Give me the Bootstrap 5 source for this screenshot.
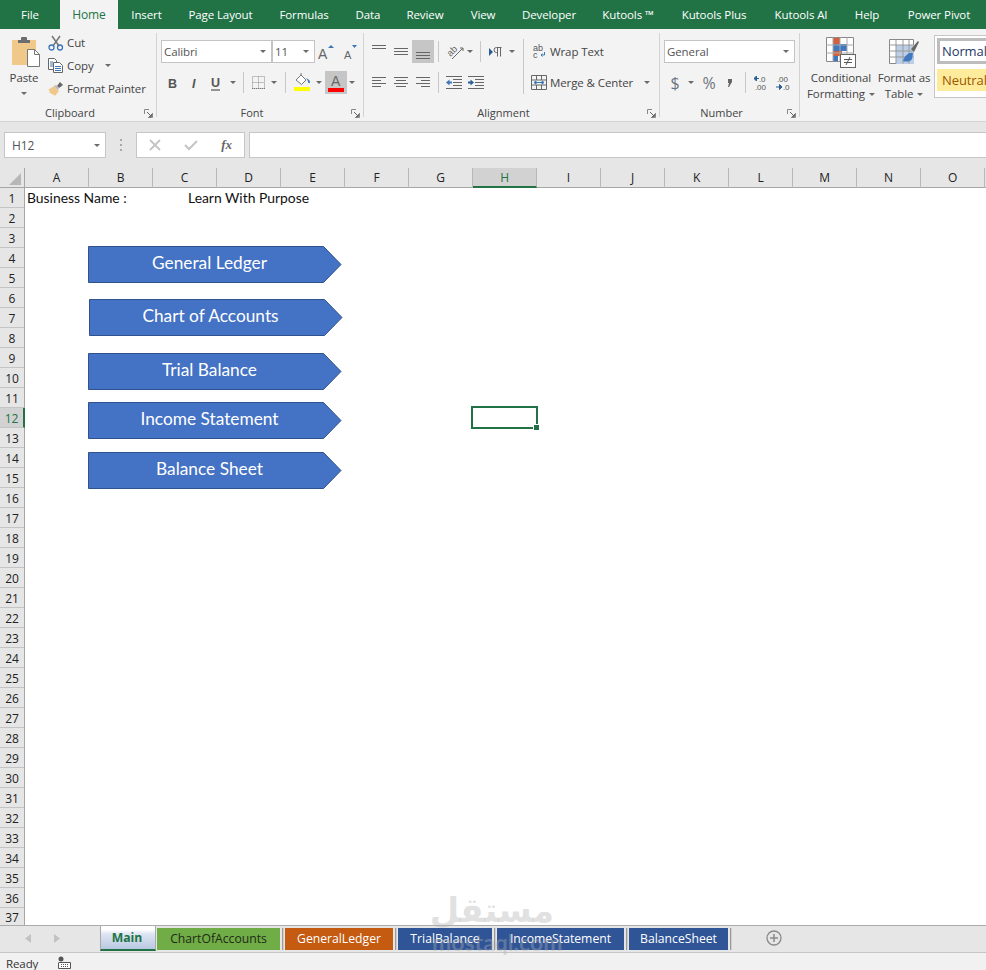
<!DOCTYPE html>
<html lang="en">
<head>
<meta charset="utf-8">
<title>Excel</title>
<link rel="stylesheet" href="https://cdn.jsdelivr.net/npm/bootstrap@5.3.0/dist/css/bootstrap.min.css">
<style>
html,body{height:970px;overflow:hidden;margin:0}
body{font-family:"Open Sans","Noto Sans",sans-serif;font-size:11.5px;color:#444;background:#fff;letter-spacing:-.1px}
.xl-app{width:986px;height:970px;position:relative;overflow:hidden}
.xl-tabs{display:grid;grid-template-columns:60px 58px 57px 91px 76px 52px 62px 54px 78px 80px 92px 82px 50px 94px;height:29px;background:#217346;color:#fff;line-height:29px;text-align:center;font-size:11.5px}
.xl-tabs .is-on{background:#f3f3f3;color:#217346;font-size:12px}
.xl-ribbon{height:93px;background:#f3f3f3;border-bottom:1px solid #d4d4d4;padding:4px 0;overflow:hidden}
.rg{height:84px;border-right:1px solid #d2d2d2;flex:none;display:flex;flex-direction:column}
.rg-clip{width:157px}.rg-font{width:207px;padding-left:4px}.rg-align{width:296px;padding-left:4px}.rg-num{width:140px;padding-left:4px}
.rg-style{width:186px;border-right:0;padding-left:6px}
.rg-body{flex:1;min-height:0}
.rg-foot{height:14px;margin-bottom:-3px;flex:none;display:flex;align-items:center;line-height:14px;font-size:11px;letter-spacing:0}
.rg-font .rg-foot,.rg-align .rg-foot,.rg-num .rg-foot{margin-left:-4px}
.rg-foot span{flex:1;text-align:center;padding-right:4px}
.launch{width:9px;height:9px;margin-right:3px;flex:none}
.rows{padding-top:7px;display:flex;flex-direction:column;gap:8px}
.rw{display:flex;height:23px;align-items:center}
.tb{width:22px;height:23px;display:flex;align-items:center;justify-content:center;flex:none;position:relative}
.tb.on{background:#c6c6c6}
.tb-n{width:10px}.tb-m{width:12px}.tb-w{width:32px;gap:3px}.tb-c{width:20px}
.drop{display:inline-block;width:0;height:0;border:3px solid transparent;border-top:3px solid #6a6a6a;border-bottom:0;flex:none}
.vs{width:1px;height:21px;background:#c8c8c8;flex:none}
.m4{margin:0 4px}.m5{margin:0 5px}.ml2{margin-left:2px}
.vs-t{width:1px;height:55px;background:#c8c8c8;margin:6px 5px 0 5px;flex:none;align-self:flex-start}
.bx{height:23px;background:#fff;border:1px solid #c4c4c4;display:flex;align-items:center;justify-content:space-between;padding:0 5px 0 2px;font-size:11.5px;color:#555}
.bx-font{width:111px}.bx-size{width:43px}.bx-num{width:131px}
.ltr{font-family:"Liberation Serif",serif;font-size:13px;color:#666}
.pastecol{width:48px;text-align:center;padding-top:4px;line-height:14px;color:#444}
.pastecol svg{display:block;margin:0 auto 4px 12px}
.pc-c{padding-top:7px}
.sm-rows{margin-top:-2px;display:flex;flex-direction:column}
.sm{height:23px;display:flex;align-items:center;gap:3px;color:#444;white-space:nowrap}
.sm svg{flex:none}
.sm-mg{margin-left:2px}
.bigb{display:flex;flex-direction:column;align-items:center;text-align:center;line-height:16px;color:#444;flex:none;padding-top:4px}
.bigb svg{margin-bottom:1px;height:32px}
.bigb-cf{width:70px}.bigb-ft{width:56px}
.gal{width:60px;height:63px;margin:2px 0 0 2px;background:#fff;border:1px solid #c6c6c6;border-right:0;padding:2px;flex:none;overflow:hidden}
.gal-a{height:26px;border:3px solid #bdbdbd;border-right:0;background:#fff;color:#1f3864;font-size:13px;line-height:21px;padding-left:2px;white-space:nowrap;overflow:hidden}
.gal-b{height:22px;margin-top:5px;background:#ffeb9c;color:#9c5700;font-size:13px;line-height:22px;padding-left:5px;white-space:nowrap;overflow:hidden}
.xl-fbar{height:46px;background:#e6e6e6;padding:10px 0 10px 4px;display:flex}
.fb{height:26px;background:#fff;border:1px solid #c6c6c6}
.fb-name{width:102px;display:flex;align-items:center;justify-content:space-between;padding:1px 5px 0 7px;font-size:12px;color:#555}
.fb-dots{width:30px;display:flex;align-items:center;justify-content:center}
.fb-fx{width:109px;display:flex;align-items:center;justify-content:space-between;padding:0 12px 0 12px}
.fb-in{flex:1;margin-left:4px;border-right:0}
.xl-cols{display:grid;grid-template-columns:25px repeat(15,64px);height:20px;background:#e6e6e6;border-bottom:1px solid #a6a6a6;line-height:19px;text-align:center;font-size:12px;color:#222}
.xl-cols>div{border-right:1px solid #b8b8b8}
.xl-cols .cor{display:flex;align-items:flex-end;justify-content:flex-end;padding:0 3px 3px 0;border-right:1px solid #a6a6a6}
.xl-cols .sel{background:#d2d2d2;color:#217346;border-bottom:2px solid #217346;height:20px}
.xl-sheet{height:737px;display:flex;position:relative;overflow:hidden}
.rh{width:25px;flex:none;background:#e6e6e6;border-right:1px solid #a6a6a6;text-align:center;font-size:12px;color:#222}
.rh div{height:20px;line-height:21px;border-bottom:1px solid #c4c4c4}
.rh div:last-child{height:17px;line-height:15px;padding-top:2px;border-bottom:0}
.rh .sel{background:#d2d2d2;color:#217346;border-right:2px solid #217346;margin-right:-1px}
.cells{flex:1;position:relative;font-family:"Lato","Open Sans",sans-serif;font-size:13.9px;color:#111;letter-spacing:0}
.celltxt{display:flex;height:20px;line-height:20px;padding-left:2px}
.celltxt span:first-child{width:161px}
.shp{position:absolute;width:255px;height:39px;color:#fff;font-family:"Lato","Open Sans",sans-serif;font-size:17.3px;letter-spacing:0}
.shp svg{position:absolute;inset:0}
.shp span{position:absolute;left:0;width:243px;top:0;line-height:33px;text-align:center}
.s1{left:63px;top:58px}.s2{left:64px;top:111px}.s3{left:63px;top:165px}.s4{left:63px;top:214px}.s5{left:63px;top:264px}
.cursor{position:absolute;left:446px;top:218px;width:67px;height:23px;border:2px solid #217346}
.cursor i{position:absolute;right:-3px;bottom:-3px;background:#217346;border:1px solid #fff;border-width:1px 0 0 1px;box-sizing:content-box;display:block;width:5px;height:5px}
.xl-sbar{height:28px;background:#e6e6e6;border-top:1px solid #ababab;border-bottom:1px solid #c6c6c6;display:flex;color:#222;font-size:12.2px}
.nav-arrows{width:100px;display:flex;align-items:center;padding:0 0 2px 25px;gap:23px}
.st{height:22px;margin-top:2px;line-height:22px;text-align:center;flex:none;letter-spacing:0}
.st-main{width:56px;height:25px;margin-top:0;border:1px solid #a8a8a8;border-top:0;border-bottom:2px solid #217346;background:linear-gradient(#fff,#fff 15%,#dde5f2 35%,#b8c8e2);color:#217346;font-weight:700;line-height:24px;margin-right:1px;padding-right:2px}
.st-a{width:123px;background:#70ad47;color:#1f2a16}
.st-b{width:108px;background:#c55a11;color:#fff}
.st-c{background:#2f5597;color:#fff}
.st-c1{width:94px}.st-c2{width:127px}.st-c3{width:99px}
.tsep{width:1px;height:22px;margin:2px 2px 0 2px;background:#9a9a9a;flex:none;box-shadow:1px 0 0 #cfcfcf}
.addtab{margin-left:33px;display:flex;align-items:center;padding-bottom:2px}
.xl-status{height:17px;background:#f1f1f1;display:flex;align-items:flex-end;padding-left:6px;font-size:11.5px;line-height:13px;color:#333;gap:20px}
.wm{position:absolute;left:432px;top:889px;width:122px;text-align:center;color:rgba(175,175,175,.38);pointer-events:none;font-weight:700}
.wm-ar{font-family:"DejaVu Sans",sans-serif;font-size:34px;line-height:42px;display:block}
.wm-en{font-family:"Lato",sans-serif;font-size:23px;line-height:22px;display:block;letter-spacing:0}
</style>
</head>
<body>
<div class="xl-app">
  <div class="xl-tabs">
    <div>File</div><div class="is-on">Home</div><div>Insert</div><div>Page Layout</div><div>Formulas</div><div>Data</div><div>Review</div><div>View</div><div>Developer</div><div>Kutools ™</div><div>Kutools Plus</div><div>Kutools AI</div><div>Help</div><div>Power Pivot</div>
  </div>

  <div class="xl-ribbon d-flex">
    <!-- Clipboard -->
    <div class="rg rg-clip">
      <div class="rg-body d-flex">
        <div class="pastecol">
          <svg width="28" height="30" viewBox="0 0 28 30"><rect x="0" y="3" width="24" height="25" rx="1" fill="#f0c98a"/><path d="M6 6V3h3V1a1 1 0 0 1 1-1h4a1 1 0 0 1 1 1v2h3v3z" fill="#6d6d6d"/><path d="M15.500 12.500h7l5 5v12h-12z" fill="#fff" stroke="#777"/><path d="M22.500 12.500v5h5" fill="none" stroke="#777"/></svg>
          <div>Paste</div>
          <div class="d-flex justify-content-center pc-c"><i class="drop"></i></div>
        </div>
        <div class="sm-rows">
          <div class="sm"><svg width="16" height="16" viewBox="0 0 16 16"><path d="M4 1l7 10M12 1L5 11" stroke="#777" stroke-width="1.500" fill="none"/><circle cx="3.500" cy="12.500" r="2.500" fill="none" stroke="#3d74b8" stroke-width="1.300"/><circle cx="12" cy="12.500" r="2.500" fill="none" stroke="#3d74b8" stroke-width="1.300"/></svg><span>Cut</span></div>
          <div class="sm"><svg width="16" height="15" viewBox="0 0 16 15"><path d="M.5.500h6l2 2v9h-8z" fill="#fff" stroke="#666"/><path d="M5.500 4.500h6l3 3v7h-9z" fill="#fff" stroke="#666"/><path d="M7 8.500h6M7 10.500h6M7 12.500h6M2 4h3M2 6h3M2 8h3" stroke="#3c78b5"/></svg><span>Copy</span><i class="drop ms-2"></i></div>
          <div class="sm"><svg width="16" height="15" viewBox="0 0 16 15"><path d="M9 5l3-4 3 3-4 3z" fill="#666"/><path d="M0 9l6-4 5 5-4 5-2-2-1 1-1-2-2 0 1-2z" fill="#f0c98a"/><path d="M6 5l2-1 3 3-1 2z" fill="#bbb"/></svg><span>Format Painter</span></div>
        </div>
      </div>
      <div class="rg-foot"><span>Clipboard</span><svg class="launch" viewBox="0 0 9 9"><path d="M.5 5V.5H5M8.500 4v4.500H4" fill="none" stroke="#888"/><path d="M3 3l4 4M5 7.500h2.500V5" fill="none" stroke="#666"/></svg></div>
    </div>

    <!-- Font -->
    <div class="rg rg-font">
      <div class="rg-body rows">
        <div class="rw">
          <div class="bx bx-font"><span>Calibri</span><i class="drop"></i></div>
          <div class="bx bx-size"><span>11</span><i class="drop"></i></div>
          <div class="tb"><svg width="18" height="18" viewBox="0 0 18 18"><text x="1" y="16" font-family="Liberation Sans" font-size="14" fill="#666">A</text><path d="M11 5l3-3 3 3z" fill="#3c78b5"/></svg></div>
          <div class="tb"><svg width="18" height="18" viewBox="0 0 18 18"><text x="5" y="16" font-family="Liberation Sans" font-size="11" fill="#666">A</text><path d="M13 2h5l-2.500 3z" fill="#3c78b5"/></svg></div>
        </div>
        <div class="rw">
          <div class="tb"><svg width="14" height="16" viewBox="0 0 14 16"><text x="3" y="13" font-family="Liberation Sans" font-weight="700" font-size="12.500" fill="#555">B</text></svg></div>
          <div class="tb"><svg width="14" height="16" viewBox="0 0 14 16"><text x="5" y="13" font-family="Liberation Sans" font-style="italic" font-weight="700" font-size="12.500" fill="#555">I</text></svg></div>
          <div class="tb"><svg width="14" height="16" viewBox="0 0 14 16"><text x="2" y="12" font-family="Liberation Sans" font-weight="700" font-size="12.500" fill="#555">U</text><path d="M2 15h9" stroke="#555" stroke-width="1.200"/></svg></div>
          <div class="tb tb-m"><i class="drop"></i></div>
          <div class="vs m4"></div>
          <div class="tb tb-c"><svg width="13" height="13" viewBox="0 0 13 13"><path d="M.5.500h12v12H.5zM6.500.500v12M.5 6.500h12" fill="none" stroke="#8a8a8a" stroke-dasharray="1 1"/><path d="M0 12.500h13" stroke="#777" stroke-dasharray="1 1"/></svg></div>
          <div class="tb tb-m"><i class="drop"></i></div>
          <div class="vs m5"></div>
          <div class="tb"><svg width="17" height="19" viewBox="0 0 17 19"><path d="M2 7l5-5 5 5-4.500 4.500z" fill="#fff" stroke="#777"/><path d="M7 2V0" stroke="#777"/><path d="M12 5c2 1 4 2 4 4s-2 1-2 0-1-3-2-4z" fill="#3c78b5"/><rect y="14" width="16" height="4" fill="#ffff00"/></svg></div>
          <div class="tb tb-m"><i class="drop"></i></div>
          <div class="tb on"><svg width="16" height="18" viewBox="0 0 16 18"><text x="3" y="12" font-family="Liberation Sans" font-size="14" fill="#666">A</text><rect y="14" width="16" height="4" fill="#f00"/></svg></div>
          <div class="tb tb-n"><i class="drop"></i></div>
        </div>
      </div>
      <div class="rg-foot"><span>Font</span><svg class="launch" viewBox="0 0 9 9"><path d="M.5 5V.5H5M8.500 4v4.500H4" fill="none" stroke="#888"/><path d="M3 3l4 4M5 7.500h2.500V5" fill="none" stroke="#666"/></svg></div>
    </div>

    <!-- Alignment -->
    <div class="rg rg-align">
      <div class="rg-body d-flex">
        <div class="rows">
          <div class="rw">
            <div class="tb"><svg width="14" height="16" viewBox="0 0 14 16"><path d="M0 1.500h14M0 4.500h14" stroke="#666" fill="none"/></svg></div>
            <div class="tb"><svg width="14" height="16" viewBox="0 0 14 16"><path d="M0 4.500h14M0 7.500h14M0 10.500h14" stroke="#666" fill="none"/></svg></div>
            <div class="tb on"><svg width="14" height="16" viewBox="0 0 14 16"><path d="M0 8.500h14M0 11.500h14M0 14.500h14" stroke="#666" fill="none"/></svg></div>
            <div class="vs m4"></div>
            <div class="tb tb-w"><svg width="19" height="18" viewBox="0 0 19 18"><text transform="rotate(-45 9 9)" x="3" y="10" font-family="Liberation Sans" font-size="9.500" fill="#666">ab</text><path d="M7 16L18 5M15 5h3v3" fill="none" stroke="#666"/></svg><i class="drop"></i></div>
            <div class="vs m5"></div>
            <div class="tb tb-w"><svg width="13" height="10" viewBox="0 0 13 10"><path d="M0 1l4 4-4 4z" fill="#2b5d95"/><path d="M8.500 9.500V.5M11.500 9.500V.5M12.500.5H7.500a2.500 2.500 0 0 0 0 5h1" fill="none" stroke="#666"/></svg><span class="ps-1 d-flex"><i class="drop"></i></span></div>
          </div>
          <div class="rw">
            <div class="tb"><svg width="14" height="11" viewBox="0 0 14 11"><path d="M0 .5h14M0 3.500h9M0 6.500h14M0 9.500h9" stroke="#666"/></svg></div>
            <div class="tb"><svg width="14" height="11" viewBox="0 0 14 11"><path d="M0 .5h14M2 3.500h10M0 6.500h14M2 9.500h10" stroke="#666"/></svg></div>
            <div class="tb"><svg width="14" height="11" viewBox="0 0 14 11"><path d="M0 .5h14M5 3.500h9M0 6.500h14M5 9.500h9" stroke="#666"/></svg></div>
            <div class="vs m4"></div>
            <div class="tb"><svg width="16" height="13" viewBox="0 0 16 13"><path d="M0 .5h16M7 3.500h9M7 6.500h9M7 9.500h9M0 12.500h16" stroke="#666"/><path d="M0 6.500l3.500-3v2H6v2H3.500v2z" fill="#3c78b5"/></svg></div>
            <div class="tb"><svg width="16" height="13" viewBox="0 0 16 13"><path d="M0 .5h16M7 3.500h9M7 6.500h9M7 9.500h9M0 12.500h16" stroke="#666"/><path d="M6 6.500l-3.500-3v2H0v2h2.500v2z" fill="#2b5d95"/></svg></div>
          </div>
        </div>
        <div class="vs-t"></div>
        <div class="rows">
          <div class="sm"><svg class="ms-1" width="14" height="18" viewBox="0 0 14 18"><text x="0" y="8" font-family="Liberation Sans" font-size="9" fill="#555">ab</text><text x="0" y="15" font-family="Liberation Sans" font-size="9" fill="#555">c</text><path d="M11.500 9v3H8M9.500 10.500L8 12l1.500 1.500" fill="none" stroke="#3c78b5"/></svg><span>Wrap Text</span></div>
          <div class="sm"><svg class="sm-mg" width="16" height="15" viewBox="0 0 16 15"><path d="M.5.500h15v14H.5zM.5 5h15M.5 10h15M5.500.500V5M10.500.500V5M5.500 10v4.500M10.500 10v4.500" fill="#f3f3f3" stroke="#666"/><path d="M3 7.500h10M3 7.500l2-1.500v3zM13 7.500l-2-1.500v3z" stroke="#3c78b5" fill="#3c78b5"/></svg><span>Merge &amp; Center</span><i class="drop ms-2"></i></div>
        </div>
      </div>
      <div class="rg-foot"><span>Alignment</span><svg class="launch" viewBox="0 0 9 9"><path d="M.5 5V.5H5M8.500 4v4.500H4" fill="none" stroke="#888"/><path d="M3 3l4 4M5 7.500h2.500V5" fill="none" stroke="#666"/></svg></div>
    </div>

    <!-- Number -->
    <div class="rg rg-num">
      <div class="rg-body rows">
        <div class="rw"><div class="bx bx-num"><span>General</span><i class="drop"></i></div></div>
        <div class="rw">
          <div class="tb"><span class="fs-6 text-secondary">$</span></div>
          <div class="tb tb-n"><i class="drop"></i></div>
          <div class="tb ml2"><span class="fs-6 text-secondary">%</span></div>
          <div class="tb tb-c"><svg width="6" height="8" viewBox="0 0 6 8"><path d="M1 0h4v3L2 8H1l1-4H1z" fill="#666"/></svg></div>
          <div class="vs m5"></div>
          <div class="tb"><svg width="16" height="16" viewBox="0 0 16 16"><text x="5" y="7" font-family="Liberation Sans" font-size="8" fill="#555">.0</text><text x="1" y="15" font-family="Liberation Sans" font-size="8" fill="#555">.00</text><path d="M5 3.500H0M0 3.500l2.500-2.500v5z" fill="#2b5d95" stroke="#2b5d95"/></svg></div>
          <div class="tb"><svg width="16" height="16" viewBox="0 0 16 16"><text x="1" y="7" font-family="Liberation Sans" font-size="8" fill="#555">.00</text><text x="7" y="15" font-family="Liberation Sans" font-size="8" fill="#555">.0</text><path d="M0 12h5M6 12l-2.500-2.500v5z" fill="#2b5d95" stroke="#2b5d95"/></svg></div>
        </div>
      </div>
      <div class="rg-foot"><span>Number</span><svg class="launch" viewBox="0 0 9 9"><path d="M.5 5V.5H5M8.500 4v4.500H4" fill="none" stroke="#888"/><path d="M3 3l4 4M5 7.500h2.500V5" fill="none" stroke="#666"/></svg></div>
    </div>

    <!-- Styles -->
    <div class="rg rg-style">
      <div class="rg-body d-flex">
        <div class="bigb bigb-cf">
          <svg width="30" height="32" viewBox="0 0 30 32"><path d="M.5.500h27v24H.5z" fill="#fff" stroke="#888"/><rect x="7" y="1" width="7" height="6" fill="#d2603c"/><rect x="7" y="7" width="14" height="7" fill="#3f78bf"/><rect x="7" y="14" width="9" height="5" fill="#d2603c"/><rect x="7" y="19" width="5" height="5" fill="#3f78bf"/><path d="M7 .5v24M14 .5v24M21 .5v24M.5 8h27M.5 16h27" stroke="#aaa" fill="none"/><rect x="14.500" y="17.500" width="15" height="13" fill="#fff" stroke="#666"/><path d="M18 22.500h8M18 25.500h8M24 20l-4 8" stroke="#555" fill="none"/></svg>
          <div>Conditional</div>
          <div class="d-flex align-items-center gap-1">Formatting<i class="drop"></i></div>
        </div>
        <div class="bigb bigb-ft">
          <svg width="30" height="32" viewBox="0 0 30 32"><path d="M.5 2.500h24v24H.5z" fill="#fff" stroke="#888"/><rect x="7" y="8" width="18" height="19" fill="#bccee8"/><path d="M.5 8h24M.5 14h24M.5 20h24M7 2.500v24M14 2.500v24M20 2.500v24" stroke="#999" fill="none"/><path d="M22 12l7-8 1 1-5 10z" fill="#666"/><path d="M14 24c2-6 6-9 10-8l-1 6c-2 3-6 3-9 2z" fill="#3f78bf"/></svg>
          <div>Format as</div>
          <div class="d-flex align-items-center gap-1">Table<i class="drop"></i></div>
        </div>
        <div class="gal">
          <div class="gal-a">Normal</div>
          <div class="gal-b">Neutral</div>
        </div>
      </div>
    </div>
  </div>

  <div class="xl-fbar">
    <div class="fb fb-name"><span>H12</span><i class="drop"></i></div>
    <div class="fb-dots"><svg width="2" height="12" viewBox="0 0 2 12"><path d="M0 0h2v2H0zM0 5h2v2H0zM0 10h2v2H0z" fill="#a8a8a8"/></svg></div>
    <div class="fb fb-fx">
      <svg width="12" height="12" viewBox="0 0 12 12"><path d="M1 1l10 10M11 1L1 11" stroke="#c4c4c4" stroke-width="1.800"/></svg>
      <svg width="14" height="12" viewBox="0 0 14 12"><path d="M1 6l4 4 8-8" fill="none" stroke="#c4c4c4" stroke-width="2"/></svg>
      <span class="fst-italic fw-bold ltr">fx</span>
    </div>
    <div class="fb fb-in"></div>
  </div>

  <div class="xl-cols">
    <div class="cor"><svg width="12" height="12" viewBox="0 0 12 12"><path d="M12 0v12H0z" fill="#b7b7b7"/></svg></div>
    <div>A</div><div>B</div><div>C</div><div>D</div><div>E</div><div>F</div><div>G</div><div class="sel">H</div><div>I</div><div>J</div><div>K</div><div>L</div><div>M</div><div>N</div><div>O</div>
  </div>

  <div class="xl-sheet">
    <div class="rh">
      <div>1</div><div>2</div><div>3</div><div>4</div><div>5</div><div>6</div><div>7</div><div>8</div><div>9</div><div>10</div><div>11</div><div class="sel">12</div><div>13</div><div>14</div><div>15</div><div>16</div><div>17</div><div>18</div><div>19</div><div>20</div><div>21</div><div>22</div><div>23</div><div>24</div><div>25</div><div>26</div><div>27</div><div>28</div><div>29</div><div>30</div><div>31</div><div>32</div><div>33</div><div>34</div><div>35</div><div>36</div><div>37</div>
    </div>
    <div class="cells">
      <div class="celltxt"><span>Business Name :</span><span>Learn With Purpose</span></div>
      <div class="shp s1"><svg width="255" height="39" viewBox="0 0 255 39"><path d="M.5.500h235l17.500 18-17.500 18H.5z" fill="#4472c4" stroke="#2f528f"/></svg><span>General Ledger</span></div>
      <div class="shp s2"><svg width="255" height="39" viewBox="0 0 255 39"><path d="M.5.500h235l17.500 18-17.500 18H.5z" fill="#4472c4" stroke="#2f528f"/></svg><span>Chart of Accounts</span></div>
      <div class="shp s3"><svg width="255" height="39" viewBox="0 0 255 39"><path d="M.5.500h235l17.500 18-17.500 18H.5z" fill="#4472c4" stroke="#2f528f"/></svg><span>Trial Balance</span></div>
      <div class="shp s4"><svg width="255" height="39" viewBox="0 0 255 39"><path d="M.5.500h235l17.500 18-17.500 18H.5z" fill="#4472c4" stroke="#2f528f"/></svg><span>Income Statement</span></div>
      <div class="shp s5"><svg width="255" height="39" viewBox="0 0 255 39"><path d="M.5.500h235l17.500 18-17.500 18H.5z" fill="#4472c4" stroke="#2f528f"/></svg><span>Balance Sheet</span></div>
      <div class="cursor"><i></i></div>
    </div>
  </div>

  <div class="xl-sbar">
    <div class="nav-arrows">
      <svg width="6" height="9" viewBox="0 0 6 9"><path d="M6 0v9L0 4.500z" fill="#c2c2c2"/></svg>
      <svg width="6" height="9" viewBox="0 0 6 9"><path d="M0 0v9l6-4.500z" fill="#c2c2c2"/></svg>
    </div>
    <div class="st st-main">Main</div>
    <div class="st st-a">ChartOfAccounts</div><div class="tsep"></div>
    <div class="st st-b">GeneralLedger</div><div class="tsep"></div>
    <div class="st st-c st-c1">TrialBalance</div><div class="tsep"></div>
    <div class="st st-c st-c2">IncomeStatement</div><div class="tsep"></div>
    <div class="st st-c st-c3">BalanceSheet</div><div class="tsep"></div>
    <div class="addtab"><svg width="16" height="16" viewBox="0 0 16 16"><circle cx="8" cy="8" r="7" fill="none" stroke="#8a8a8a" stroke-width="1.300"/><path d="M8 4v8M4 8h8" stroke="#8a8a8a" stroke-width="1.500"/></svg></div>
  </div>

  <div class="xl-status">
    <span>Ready</span>
    <svg width="13" height="14" viewBox="0 0 13 14"><circle cx="3" cy="3" r="2.500" fill="#555"/><path d="M1 6.500h11.500v6H.5v-6" fill="#fff" stroke="#555"/><path d="M3 8.500h8M3 10.500h8" stroke="#555" stroke-dasharray="1 1"/></svg>
  </div>

  <div class="wm"><span class="wm-ar" lang="ar" dir="rtl">مستقل</span><span class="wm-en">mostaql.com</span></div>
</div>
<script src="https://cdn.jsdelivr.net/npm/bootstrap@5.3.0/dist/js/bootstrap.bundle.min.js"></script>
</body>
</html>
